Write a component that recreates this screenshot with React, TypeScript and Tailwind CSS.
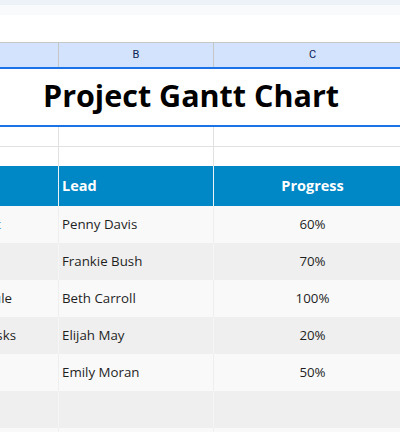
import React from "react";

const rows = [
  { a: "t", aBlue: true, lead: "Penny Davis", p: "60%" },
  { a: "", lead: "Frankie Bush", p: "70%" },
  { a: "ule", lead: "Beth Carroll", p: "100%" },
  { a: "sks", lead: "Elijah May", p: "20%" },
  { a: "", lead: "Emily Moran", p: "50%" },
  { a: "", lead: "", p: "" },
  { a: "", lead: "", p: "" },
];

export default function App() {
  return (
    <div
      className="w-[400px] h-[432px] overflow-hidden bg-white text-[#1f1f1f]"
      style={{ fontFamily: '"Open Sans", "Noto Sans", sans-serif' }}
    >
      <div className="h-[5px] bg-[#edf2f8]" />
      <div className="h-[10px] bg-[#f8fafc]" />
      <div className="h-[27px] bg-white" />
      {/* column header */}
      <div className="flex h-[27px] border-t border-[#c4c7c5] border-b-2 border-b-[#1a73e8] bg-[#d3e3fd]">
        <div className="w-[59px] shrink-0 border-r-[1.5px] border-[#c4c7c5]" />
        <div
          className="w-[155px] shrink-0 border-r-[1.5px] border-[#c4c7c5] flex items-center justify-center text-[11px] text-[#0b2252]"
          style={{ fontFamily: "Roboto, Arial, sans-serif" }}
        >
          B
        </div>
        <div
          className="w-[197px] shrink-0 flex items-center justify-center text-[11px] text-[#0b2252]"
          style={{ fontFamily: "Roboto, Arial, sans-serif" }}
        >
          C
        </div>
      </div>
      {/* title */}
      <div className="h-[58px] border-b-2 border-[#1a73e8] flex">
        <div className="w-[382px] shrink-0 flex items-center justify-center text-[30.5px] font-bold text-black pb-[2px]">
          Project Gantt Chart
        </div>
      </div>
      {/* empty rows */}
      <div className="flex h-[20px] border-b border-[#e1e1e1]">
        <div className="w-[59px] shrink-0 border-r border-[#e1e1e1]" />
        <div className="w-[155px] shrink-0 border-r border-[#e1e1e1]" />
        <div className="w-[197px] shrink-0" />
      </div>
      <div className="flex h-[19px]">
        <div className="w-[59px] shrink-0 border-r border-[#e1e1e1]" />
        <div className="w-[155px] shrink-0 border-r border-[#e1e1e1]" />
        <div className="w-[197px] shrink-0" />
      </div>
      {/* header */}
      <div className="flex h-[40px] bg-[#0087c6] text-white font-bold text-[14.5px]">
        <div className="w-[59px] shrink-0 border-r border-[#e8f2f8]" />
        <div className="w-[155px] shrink-0 border-r border-[#e8f2f8] flex items-center pl-[3px]">
          Lead
        </div>
        <div className="w-[197px] shrink-0 flex items-center justify-center">
          Progress
        </div>
      </div>
      {rows.map((r, i) => (
        <div
          key={i}
          className={`flex h-[37px] text-[13.3px] ${i % 2 === 0 ? "bg-[#f9f9f9]" : "bg-[#efefef]"}`}
        >
          <div
            className={`w-[59px] shrink-0 border-r overflow-hidden flex items-center justify-end ${
              i % 2 === 0 ? "border-[#efefef]" : "border-[#f5f5f5]"
            } ${r.a === "ule" ? "pr-[46px]" : r.a === "sks" ? "pr-[42px]" : "pr-[57px]"}`}
          >
            <span className={`whitespace-nowrap ${r.aBlue ? "text-[#3d8fe0]" : ""}`}>{r.a}</span>
          </div>
          <div
            className={`w-[155px] shrink-0 border-r flex items-center pl-[3px] pt-[1px] ${
              i % 2 === 0 ? "border-[#efefef]" : "border-[#f5f5f5]"
            }`}
          >
            {r.lead}
          </div>
          <div className="w-[197px] shrink-0 flex items-center justify-center pt-[1px]">{r.p}</div>
        </div>
      ))}
    </div>
  );
}
